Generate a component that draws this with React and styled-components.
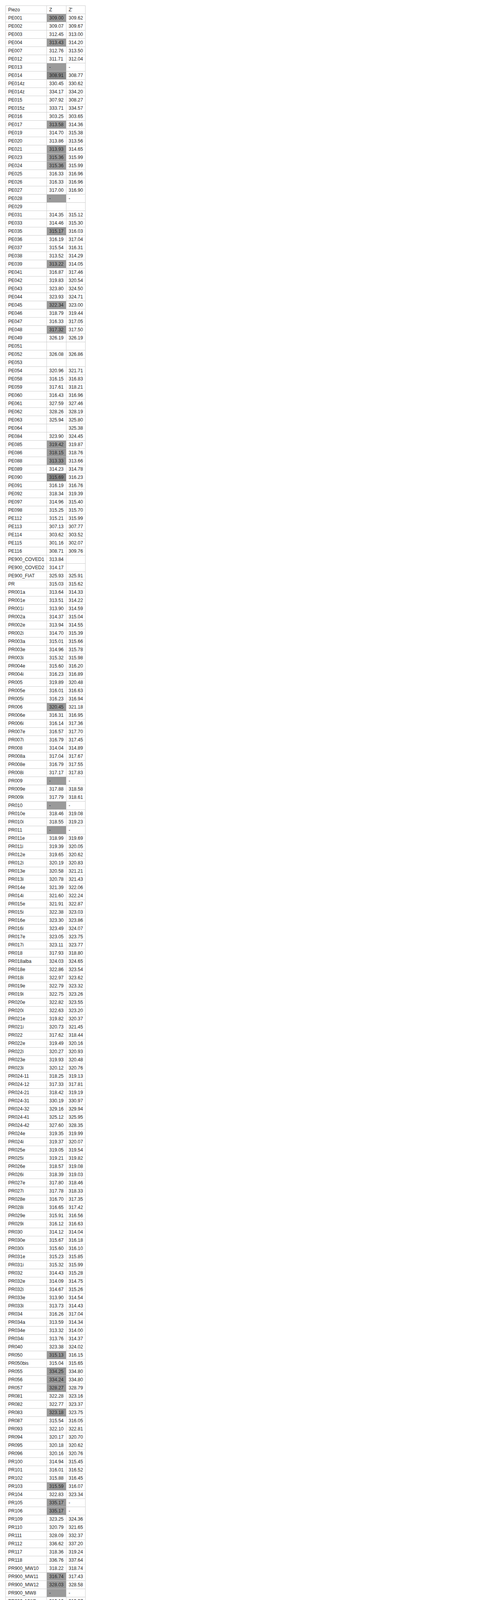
import React from 'react';
import styled, { createGlobalStyle } from 'styled-components';

const GlobalStyle = createGlobalStyle`
    html, body {
        margin: 0;
        padding: 0;
        background: #ffffff;
    }
    body {
        font-family: "Liberation Sans", Arial, sans-serif;
        color: #222222;
    }
`;

const Page = styled.div`
    padding: 14px;
`;

const Table = styled.table`
    border-collapse: collapse;
    border: 1px solid #cccccc;
    font-family: "Liberation Sans", Arial, sans-serif;
    font-size: 12px;
    line-height: 14px;
    color: #222222;
`;

const HeadCell = styled.th`
    border: 1px solid #cccccc;
    padding: 3px 6px;
    text-align: left;
    font-weight: normal;
    white-space: nowrap;
`;

const shades = {
    1: '#9a9a9a',
    2: '#878787',
};

const Cell = styled.td`
    border: 1px solid #cccccc;
    padding: 3px 6px;
    text-align: left;
    white-space: nowrap;
    background: ${(p) => shades[p.$shade] || 'transparent'};
`;

// name, Z, Z', highlight (0 none, 1 gray, 2 dark gray)
const rows = [
    ['PE001', '309.00', '309.62', 1],
    ['PE002', '309.07', '309.67', 0],
    ['PE003', '312.45', '313.00', 0],
    ['PE004', '313.43', '314.20', 1],
    ['PE007', '312.76', '313.50', 0],
    ['PE012', '311.71', '312.04', 0],
    ['PE013', '-', '-', 1],
    ['PE014', '308.91', '308.77', 2],
    ['PE014z', '330.45', '330.62', 0],
    ['PE014z', '334.17', '334.20', 0],
    ['PE015', '307.92', '308.27', 0],
    ['PE015z', '333.71', '334.57', 0],
    ['PE016', '303.25', '303.65', 0],
    ['PE017', '313.58', '314.36', 1],
    ['PE019', '314.70', '315.38', 0],
    ['PE020', '313.86', '313.56', 0],
    ['PE021', '313.93', '314.65', 1],
    ['PE023', '315.36', '315.99', 1],
    ['PE024', '315.36', '315.99', 1],
    ['PE025', '316.33', '316.96', 0],
    ['PE026', '316.33', '316.96', 0],
    ['PE027', '317.00', '316.90', 0],
    ['PE028', '-', '-', 1],
    ['PE029', '', '', 0],
    ['PE031', '314.35', '315.12', 0],
    ['PE033', '314.46', '315.30', 0],
    ['PE035', '315.17', '316.03', 1],
    ['PE036', '316.19', '317.04', 0],
    ['PE037', '315.54', '316.31', 0],
    ['PE038', '313.52', '314.29', 0],
    ['PE039', '313.22', '314.05', 1],
    ['PE041', '316.87', '317.46', 0],
    ['PE042', '319.83', '320.54', 0],
    ['PE043', '323.80', '324.50', 0],
    ['PE044', '323.93', '324.71', 0],
    ['PE045', '322.34', '323.00', 1],
    ['PE046', '318.79', '319.44', 0],
    ['PE047', '316.33', '317.05', 0],
    ['PE048', '317.32', '317.50', 1],
    ['PE049', '326.19', '326.19', 0],
    ['PE051', '', '', 0],
    ['PE052', '326.08', '326.86', 0],
    ['PE053', '', '', 0],
    ['PE054', '320.96', '321.71', 0],
    ['PE058', '316.15', '316.83', 0],
    ['PE059', '317.61', '318.21', 0],
    ['PE060', '316.43', '316.96', 0],
    ['PE061', '327.59', '327.46', 0],
    ['PE062', '328.26', '328.19', 0],
    ['PE063', '325.94', '325.80', 0],
    ['PE064', '', '325.38', 0],
    ['PE084', '323.90', '324.45', 0],
    ['PE085', '319.42', '319.87', 1],
    ['PE086', '318.15', '318.76', 1],
    ['PE088', '313.33', '313.66', 1],
    ['PE089', '314.23', '314.78', 0],
    ['PE090', '315.69', '316.23', 2],
    ['PE091', '316.19', '316.76', 0],
    ['PE092', '318.34', '319.39', 0],
    ['PE097', '314.96', '315.40', 0],
    ['PE098', '315.25', '315.70', 0],
    ['PE112', '315.21', '315.99', 0],
    ['PE113', '307.13', '307.77', 0],
    ['PE114', '303.62', '303.52', 0],
    ['PE115', '301.16', '302.07', 0],
    ['PE116', '308.71', '309.76', 0],
    ['PE900_COVED1', '313.84', '', 0],
    ['PE900_COVED2', '314.17', '', 0],
    ['PE900_FIAT', '325.93', '325.91', 0],
    ['PR', '315.03', '315.62', 0],
    ['PR001a', '313.64', '314.33', 0],
    ['PR001e', '313.51', '314.22', 0],
    ['PR001i', '313.90', '314.59', 0],
    ['PR002a', '314.37', '315.04', 0],
    ['PR002e', '313.94', '314.55', 0],
    ['PR002i', '314.70', '315.39', 0],
    ['PR003a', '315.01', '315.66', 0],
    ['PR003e', '314.96', '315.78', 0],
    ['PR003i', '315.32', '315.98', 0],
    ['PR004e', '315.60', '316.20', 0],
    ['PR004i', '316.23', '316.89', 0],
    ['PR005', '319.89', '320.48', 0],
    ['PR005e', '316.01', '316.63', 0],
    ['PR005i', '316.23', '316.94', 0],
    ['PR006', '320.45', '321.18', 1],
    ['PR006e', '316.31', '316.95', 0],
    ['PR006i', '316.14', '317.36', 0],
    ['PR007e', '316.57', '317.70', 0],
    ['PR007i', '316.79', '317.45', 0],
    ['PR008', '314.04', '314.89', 0],
    ['PR008a', '317.04', '317.67', 0],
    ['PR008e', '316.79', '317.55', 0],
    ['PR008i', '317.17', '317.83', 0],
    ['PR009', '-', '-', 1],
    ['PR009e', '317.88', '318.58', 0],
    ['PR009i', '317.79', '318.61', 0],
    ['PR010', '-', '-', 1],
    ['PR010e', '318.46', '319.08', 0],
    ['PR010i', '318.55', '319.23', 0],
    ['PR011', '-', '-', 1],
    ['PR011e', '318.99', '319.69', 0],
    ['PR011i', '319.39', '320.05', 0],
    ['PR012e', '319.65', '320.62', 0],
    ['PR012i', '320.19', '320.83', 0],
    ['PR013e', '320.58', '321.21', 0],
    ['PR013i', '320.78', '321.43', 0],
    ['PR014e', '321.39', '322.06', 0],
    ['PR014i', '321.60', '322.24', 0],
    ['PR015e', '321.91', '322.87', 0],
    ['PR015i', '322.38', '323.03', 0],
    ['PR016e', '323.30', '323.86', 0],
    ['PR016i', '323.49', '324.07', 0],
    ['PR017e', '323.05', '323.75', 0],
    ['PR017i', '323.11', '323.77', 0],
    ['PR018', '317.93', '318.80', 0],
    ['PR018alba', '324.03', '324.65', 0],
    ['PR018e', '322.86', '323.54', 0],
    ['PR018i', '322.97', '323.62', 0],
    ['PR019e', '322.79', '323.32', 0],
    ['PR019i', '322.75', '323.26', 0],
    ['PR020e', '322.82', '323.55', 0],
    ['PR020i', '322.63', '323.20', 0],
    ['PR021e', '319.82', '320.37', 0],
    ['PR021i', '320.73', '321.45', 0],
    ['PR022', '317.62', '318.44', 0],
    ['PR022e', '319.49', '320.16', 0],
    ['PR022i', '320.27', '320.93', 0],
    ['PR023e', '319.93', '320.48', 0],
    ['PR023i', '320.12', '320.76', 0],
    ['PR024-11', '318.25', '319.13', 0],
    ['PR024-12', '317.33', '317.81', 0],
    ['PR024-21', '318.42', '319.19', 0],
    ['PR024-31', '330.19', '330.97', 0],
    ['PR024-32', '329.16', '329.94', 0],
    ['PR024-41', '325.12', '325.95', 0],
    ['PR024-42', '327.60', '328.35', 0],
    ['PR024e', '319.35', '319.99', 0],
    ['PR024i', '319.37', '320.07', 0],
    ['PR025e', '319.05', '319.54', 0],
    ['PR025i', '319.21', '319.82', 0],
    ['PR026e', '318.57', '319.08', 0],
    ['PR026i', '318.39', '319.03', 0],
    ['PR027e', '317.80', '318.46', 0],
    ['PR027i', '317.78', '318.33', 0],
    ['PR028e', '316.70', '317.35', 0],
    ['PR028i', '316.65', '317.42', 0],
    ['PR029e', '315.91', '316.56', 0],
    ['PR029i', '316.12', '316.63', 0],
    ['PR030', '314.12', '314.04', 0],
    ['PR030e', '315.67', '316.18', 0],
    ['PR030i', '315.60', '316.10', 0],
    ['PR031e', '315.23', '315.85', 0],
    ['PR031i', '315.32', '315.99', 0],
    ['PR032', '314.43', '315.28', 0],
    ['PR032e', '314.09', '314.75', 0],
    ['PR032i', '314.67', '315.26', 0],
    ['PR033e', '313.90', '314.54', 0],
    ['PR033i', '313.73', '314.43', 0],
    ['PR034', '316.26', '317.04', 0],
    ['PR034a', '313.59', '314.34', 0],
    ['PR034e', '313.32', '314.00', 0],
    ['PR034i', '313.76', '314.37', 0],
    ['PR040', '323.38', '324.02', 0],
    ['PR050', '315.13', '316.15', 1],
    ['PR050bis', '315.04', '315.65', 0],
    ['PR055', '334.25', '334.80', 1],
    ['PR056', '334.24', '334.80', 1],
    ['PR057', '328.27', '328.79', 1],
    ['PR081', '322.28', '323.16', 0],
    ['PR082', '322.77', '323.37', 0],
    ['PR083', '323.18', '323.75', 1],
    ['PR087', '315.54', '316.05', 0],
    ['PR093', '322.10', '322.81', 0],
    ['PR094', '320.17', '320.70', 0],
    ['PR095', '320.18', '320.62', 0],
    ['PR096', '320.16', '320.76', 0],
    ['PR100', '314.94', '315.45', 0],
    ['PR101', '316.01', '316.52', 0],
    ['PR102', '315.88', '316.45', 0],
    ['PR103', '315.59', '316.07', 1],
    ['PR104', '322.83', '323.34', 0],
    ['PR105', '335.17', '-', 1],
    ['PR106', '335.17', '-', 1],
    ['PR109', '323.25', '324.36', 0],
    ['PR110', '320.79', '321.65', 0],
    ['PR111', '328.09', '332.37', 0],
    ['PR112', '336.62', '337.20', 0],
    ['PR117', '318.36', '319.24', 0],
    ['PR118', '336.76', '337.64', 0],
    ['PR900_MW10', '318.22', '318.74', 0],
    ['PR900_MW11', '316.74', '317.43', 1],
    ['PR900_MW12', '328.03', '328.58', 1],
    ['PR900_MW8', '-', '-', 1],
    ['PR900_MW9', '319.16', '319.97', 0],
    ['PR900_SC1', '320.04', '320.92', 1],
    ['PR900_SC107', '323.07', '-', 1],
    ['PR900_SC108', '315.74', '-', 1],
    ['PR900_SC2', '319.88', '321.00', 0],
    ['PR900_SC3', '326.37', '327.24', 1],
    ['PR900_SC4', '326.66', '327.32', 1],
    ['PR900_SP1', '318.06', '-', 1],
    ['PR900_SP2', '313.48', '-', 1],
    ['PR900_SP3', '321.20', '', 0],
    ['PR900_SP4', '319.34', '-', 1],
    ['PR99', '314.98', '315.48', 1],
    ['PU001', '332.92', '332.82', 0],
    ['PU002', '332.4', '332.30', 0],
    ['PU003', '332.43', '332.33', 0],
    ['PU004', '332.24', '332.14', 0],
    ['PU005', '333.1', '333.00', 0],
    ['PU006', '332.41', '332.31', 0],
    ['PU007', '332.57', '332.47', 0],
    ['PU008', '331.77', '331.67', 0],
    ['PU009', '-', '-', 1],
    ['PU010', '332.11', '332.70', 0],
    ['PU011', '331.94', '332.50', 0],
    ['PU012', '331.59', '332.24', 0],
    ['PU013', '330.69', '331.54', 0],
    ['PU900_PL', '333.9', '', 0],
    ['PU900_PP', '333.9', '', 1],
    ['PU900_PQ', '333.99', '334.64', 0],
];

function App() {
    return (
        <Page>
            <GlobalStyle />
            <Table>
                <thead>
                    <tr>
                        <HeadCell>Piezo</HeadCell>
                        <HeadCell>Z</HeadCell>
                        <HeadCell>Z'</HeadCell>
                    </tr>
                </thead>
                <tbody>
                    {rows.map(([name, z, zp, shade], i) => (
                        <tr key={name + i}>
                            <Cell>{name}</Cell>
                            <Cell $shade={shade}>{z}</Cell>
                            <Cell>{zp}</Cell>
                        </tr>
                    ))}
                </tbody>
            </Table>
        </Page>
    );
}

export default App;
